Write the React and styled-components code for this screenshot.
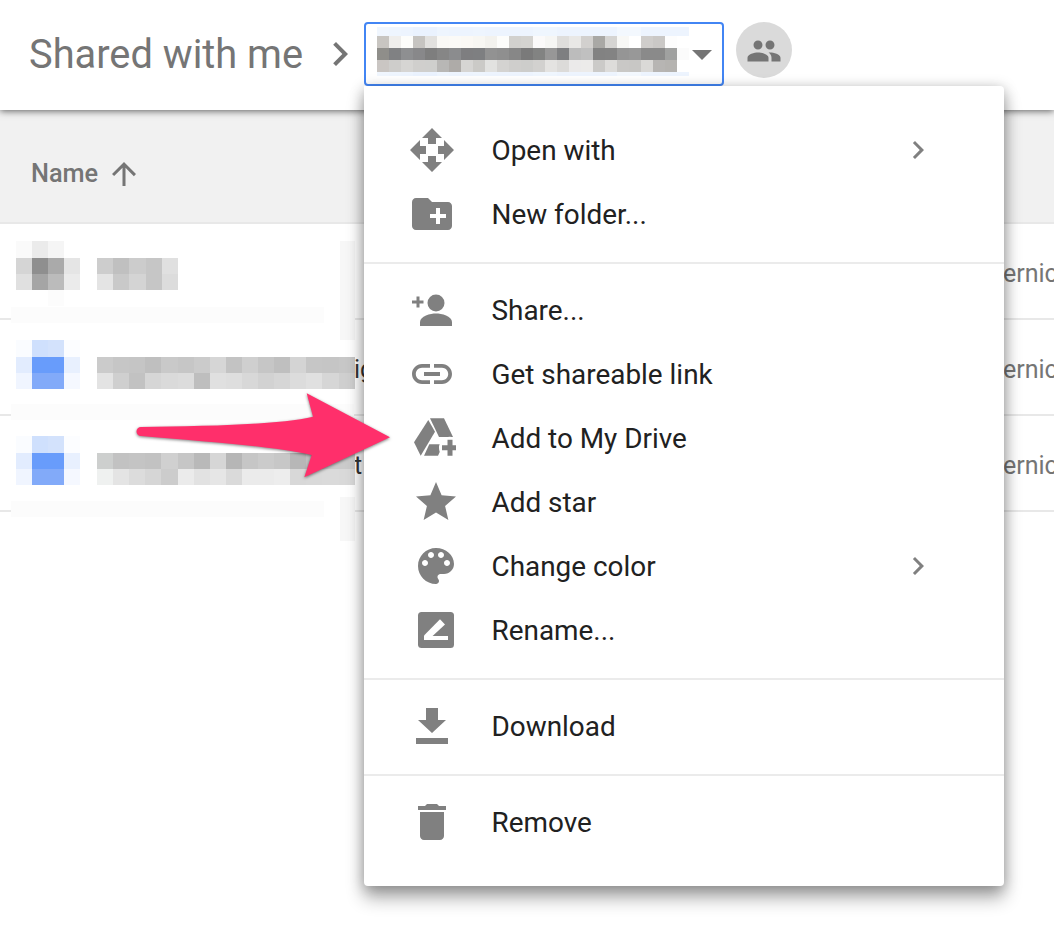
import React from "react";
import styled, { createGlobalStyle } from "styled-components";

const Global = createGlobalStyle`
  html, body { margin: 0; padding: 0; background: #fff; }
  body { font-family: Roboto, "Liberation Sans", sans-serif; }
`;

const Page = styled.div`
  position: relative;
  width: 1054px;
  height: 938px;
  overflow: hidden;
  background: #fff;
`;

const TopBar = styled.header`
  position: relative;
  z-index: 2;
  display: flex;
  align-items: flex-start;
  height: 110px;
  box-sizing: border-box;
  padding: 22px 0 0 29px;
  background: #fff;
  box-shadow: 0 1px 7px rgba(0, 0, 0, 0.62);
`;

const Title = styled.h1`
  flex: none;
  width: 273px;
  margin: 1px 0 0;
  font-size: 39.8px;
  font-weight: 400;
  line-height: 64px;
  color: #757575;
  white-space: nowrap;
`;

const Crumb = styled.svg`
  flex: none;
  width: 48px;
  height: 48px;
  margin: 8px 0 0 14px;
  fill: #757575;
`;

const Dropdown = styled.div`
  flex: none;
  display: flex;
  align-items: flex-start;
  width: 360px;
  height: 64px;
  box-sizing: border-box;
  padding: 3px 0 0 11px;
  border: 2px solid #4285f4;
  border-radius: 4px;
  background: #fff;
`;

const Caret = styled.svg`
  flex: none;
  width: 20px;
  height: 10px;
  margin: 23px 0 0 3px;
  fill: #757575;
`;

const Avatar = styled.div`
  flex: none;
  display: flex;
  align-items: center;
  justify-content: center;
  width: 56px;
  height: 56px;
  margin-left: 12px;
  border-radius: 50%;
  background: #dadada;
`;

const AvatarIcon = styled.svg`
  width: 36px;
  height: 36px;
  margin-top: 2px;
  fill: #757575;
`;

const HeaderRow = styled.div`
  display: flex;
  align-items: center;
  height: 114px;
  padding: 14px 0 0 31px;
  box-sizing: border-box;
  background: #f1f1f1;
  border-bottom: 2px solid #e8e8e8;
`;

const ColumnName = styled.span`
  font-size: 25.3px;
  font-weight: 500;
  color: #757575;
`;

const SortIcon = styled.svg`
  width: 36px;
  height: 36px;
  margin: 2px 0 0 8px;
  fill: #757575;
`;

const Row = styled.div`
  position: relative;
  display: grid;
  grid-template-columns: 354px 649px 1fr;
  align-items: center;
  height: 96px;
  box-sizing: border-box;
  border-bottom: 2px solid #e8e8e8;
  overflow: visible;
`;

const NameTail = styled.span`
  grid-column: 2;
  font-size: 25px;
  color: #333;
  margin-top: 4px;
`;

const Owner = styled.span`
  grid-column: 3;
  font-size: 25px;
  color: #757575;
  white-space: nowrap;
  margin-top: 4px;
`;

const Blur = styled.svg`
  position: absolute;
  left: 11px;
  top: ${(p) => p.$top}px;
  display: block;
`;

const Mosaic = styled.svg`
  flex: none;
  display: block;
  shape-rendering: crispEdges;
`;

const Menu = styled.nav`
  position: absolute;
  z-index: 3;
  left: 364px;
  top: 86px;
  width: 640px;
  box-sizing: border-box;
  padding: 32px 0;
  background: #fff;
  border-radius: 0 4px 4px 4px;
  box-shadow: 0 12px 18px rgba(0, 0, 0, 0.32), 0 2px 14px rgba(0, 0, 0, 0.25);
`;

const MenuItem = styled.div`
  display: flex;
  align-items: center;
  height: 64px;
  padding: 0 68px 0 44px;
`;

const ItemIcon = styled.svg`
  flex: none;
  width: 48px;
  height: 48px;
  margin-right: 36px;
  fill: #808080;
`;

const ItemLabel = styled.span`
  flex: 1;
  margin-left: -0.5px;
  font-size: 27.9px;
  color: #212121;
`;

const Submenu = styled.svg`
  flex: none;
  width: 36px;
  height: 36px;
  fill: #808080;
`;

const Divider = styled.hr`
  height: 2px;
  margin: 16px 0 14px;
  border: 0;
  background: #ebebeb;
`;

const Callout = styled.svg`
  position: absolute;
  z-index: 4;
  left: 130px;
  top: 385px;
  width: 270px;
  height: 100px;
  fill: #ff2f6b;
  filter: drop-shadow(0 1px 1.5px rgba(0, 0, 0, 0.5));
`;

const Cells = ({ x, y, w, h, colors }) =>
  colors.map((c, i) => <rect key={`${x}-${y}-${i}`} x={x + i * w} y={y} width={w} height={h} fill={c} shapeRendering="crispEdges" />);

const gray = (s) => s.split(" ").map((v) => `#${v}`);

const crumbTop = "f0f6fe eef5fe edf4fe eaf2fe eaf2fe eef5fe edf4fe edf4fe eef5fe edf4fe edf4fe edf4fe edf4fe eff6fe eff6fe edf4fe edf4fe edf4fe edf4fe edf4fe f3f8fe f3f8fe edf4fe edf4fe edf4fe edf4fe";
const crumbA = "c8c5c1 efeeec fdfdfb c6c4c1 e2e1df faf9f6 fbfaf7 fbf9f5 f8f7f3 f3f2ee fdfdfb d2d1ce d4d3d0 fbfafa f6f6f4 dfdedc e9e8e6 d2d0ce a9a8a5 d5d4d2 f8f8f6 ffffff cfcdcb cac8c6 fdfdfd ffffff";
const crumbB = "8f8e8a 808183 8e8f91 88888a 7e7e7e 868686 8b8c8e 7e7e80 7e7f81 929292 8f8f8f 878787 7a7a7a 828382 979797 7e7f81 bcbcbc c0c0c0 828282 838383 959595 989898 8a8a8a 8a8a8a a0a1a0 fbfbfb";
const crumbC = "cac6c3 cecdcb d6d5d3 d0cfcd cfcfcd b8b7b5 aeaba8 d6d5d3 cbcac7 e2e2e0 d4d3d1 cfcecc cdcdcb d2d1cf e4e3e1 dcdbd9 ebeaea ecebea cbcac8 dddcda c9c8c6 c8c7c5 dad9d7 b7b5b3 b5b3b0 ffffff";

const BlurBackdrop = ({ height }) => <rect x="0" y="0" width="343" height={height} fill="#fff" />;

const BlurOne = () => (
  <Blur $top={17} width="344" height="99" viewBox="0 0 344 99">
    <BlurBackdrop height={99} />
    <Cells x={5} y={0} w={16} h={17} colors={gray("fafafa ebebeb f5f5f5")} />
    <Cells x={5} y={17} w={16} h={16} colors={gray("d5d5d5 8f8f8f aaaaaa e5e5e5")} />
    <Cells x={5} y={33} w={16} h={16} colors={gray("e0e0e0 a5a5a5 bbbbbb ebebeb")} />
    <Cells x={37} y={49} w={16} h={16} colors={gray("fcfcfc")} />
    <Cells x={86} y={17} w={16.2} h={16} colors={gray("cdcdcd c0c0c0 cccccc c6c6c6 e0e0e0")} />
    <Cells x={86} y={33} w={16.2} h={16} colors={gray("e4e4e4 c9c9c9 d4d4d4 c6c6c6 dcdcdc")} />
    <rect x="0" y="66" width="313" height="16" fill="#fcfcfc" />
    <rect x="329" y="0" width="15" height="99" fill="#f7f7f7" />
  </Blur>
);

const BlurFile = ({ top, height, a, b, bandY, edge }) => (
  <Blur $top={top} width="344" height={height} viewBox={`0 0 344 ${height}`}>
    <BlurBackdrop height={height} />
    <Cells x={5} y={0} w={16} h={17} colors={gray("fafcff cfe0fd d3e2fc fcfdff")} />
    <Cells x={5} y={17} w={16} h={16} colors={gray("e2ecfe 689cfb 689cfb e8f0fe")} />
    <Cells x={5} y={33} w={16} h={16} colors={gray("f0f5ff 82aaf9 82aaf9 f5f8ff")} />
    <Cells x={86} y={17} w={16.1} h={16} colors={gray(a)} />
    <Cells x={86} y={33} w={16.1} h={16} colors={gray(b)} />
    <rect x="0" y={bandY} width={edge ? 313 : 343} height="16" fill="#fcfcfc" />
    {edge && <rect x="329" y={bandY - 4} width="15" height={height - bandY + 4} fill="#f7f7f7" />}
  </Blur>
);

const paths = {
  open: "M10 9h4V6h3l-5-5-5 5h3v3zm-1 1H6V7l-5 5 5 5v-3h3v-4zm14 2l-5-5v3h-3v4h3v3l5-5zm-9 3h-4v3H7l5 5 5-5h-3v-3z",
  folder: "M20 6h-8l-2-2H4c-1.11 0-1.99.89-1.99 2L2 18c0 1.11.89 2 2 2h16c1.11 0 2-.89 2-2V8c0-1.11-.89-2-2-2zm-1 8h-3v3h-2v-3h-3v-2h3V9h2v3h3v2z",
  link: "M3.9 12c0-1.71 1.39-3.1 3.1-3.1h4V7H7c-2.76 0-5 2.24-5 5s2.24 5 5 5h4v-1.9H7c-1.71 0-3.1-1.39-3.1-3.1zM8 13h8v-2H8v2zm9-6h-4v1.9h4c1.71 0 3.1 1.39 3.1 3.1s-1.39 3.1-3.1 3.1h-4V17h4c2.76 0 5-2.24 5-5s-2.24-5-5-5z",
  star: "M12 17.27L18.18 21l-1.64-7.03L22 9.24l-7.19-.61L12 2 9.19 8.63 2 9.24l5.46 4.73L5.82 21z",
  palette: "M12 3c-4.97 0-9 4.03-9 9s4.03 9 9 9c.83 0 1.5-.67 1.5-1.5 0-.39-.15-.74-.39-1.01-.23-.26-.38-.61-.38-.99 0-.83.67-1.5 1.5-1.5H16c2.76 0 5-2.24 5-5 0-4.42-4.03-8-9-8zm-5.5 9c-.83 0-1.5-.67-1.5-1.5S5.67 9 6.5 9 8 9.67 8 10.5 7.33 12 6.5 12zm3-4C8.67 8 8 7.33 8 6.5S8.67 5 9.5 5s1.5.67 1.5 1.5S10.33 8 9.5 8zm5 0c-.83 0-1.5-.67-1.5-1.5S13.67 5 14.5 5s1.5.67 1.5 1.5S15.33 8 14.5 8zm3 4c-.83 0-1.5-.67-1.5-1.5S16.67 9 17.5 9s1.5.67 1.5 1.5-.67 1.5-1.5 1.5z",
  trash: "M6 19c0 1.1.9 2 2 2h8c1.1 0 2-.9 2-2V7H6v12zM19 4h-3.5l-1-1h-5l-1 1H5v2h14V4z",
  chevron: "M10 6L8.59 7.41 13.17 12l-4.58 4.59L10 18l6-6z",
  people: "M16 11c1.66 0 2.99-1.34 2.99-3S17.66 5 16 5c-1.66 0-3 1.34-3 3s1.34 3 3 3zm-8 0c1.66 0 2.99-1.34 2.99-3S9.66 5 8 5C6.34 5 5 6.34 5 8s1.34 3 3 3zm0 2c-2.33 0-7 1.17-7 3.5V19h14v-2.5c0-2.33-4.67-3.5-7-3.5zm8 0c-.29 0-.62.02-.97.05 1.16.84 1.97 1.97 1.97 3.45V19h6v-2.5c0-2.33-4.67-3.5-7-3.5z",
  up: "M4 12l1.41 1.41L11 7.83V20h2V7.83l5.58 5.59L20 12l-8-8-8 8z",
};

const icons = {
  open: <ItemIcon viewBox="0 0 24 24"><path d={paths.open} /></ItemIcon>,
  folder: <ItemIcon viewBox="0 0 24 24"><path d={paths.folder} /></ItemIcon>,
  share: (
    <ItemIcon viewBox="0 0 48 48">
      <circle cx="28" cy="17" r="8.5" />
      <path d="M12 40v-4c0-6 10.500-8.500 16-8.500S44 30 44 36v4z" />
      <path d="M8.500 10.500h3v4h4v3h-4v4h-3v-4h-4.500v-3h4.500z" />
    </ItemIcon>
  ),
  link: <ItemIcon viewBox="0 0 24 24"><path d={paths.link} /></ItemIcon>,
  drive: (
    <ItemIcon viewBox="0 0 48 48">
      <path d="M22 4.300h14L45 23H31z" />
      <path d="M20.300 6 6 28.300l6.700 13.400L27 17.700z" />
      <path d="M21.300 30.300h14L30 41.700H16z" />
      <circle cx="42" cy="33.700" r="11" fill="#fff" />
      <path d="M39.500 25.700h5v5.500h5.500v5h-5.500v5.500h-5v-5.500H34v-5h5.500z" />
    </ItemIcon>
  ),
  star: <ItemIcon viewBox="-2 0 24 24"><path d={paths.star} /></ItemIcon>,
  palette: <ItemIcon viewBox="-2 0 24 24"><path d={paths.palette} /></ItemIcon>,
  rename: (
    <ItemIcon viewBox="-4 0 48 48">
      <rect x="6" y="6" width="36" height="36" rx="3.500" />
      <path d="M12 29.500 28 13.300l5 5.200L19.500 31 12 34z" fill="#fff" />
      <rect x="12" y="30" width="24" height="4" fill="#fff" />
    </ItemIcon>
  ),
  download: (
    <ItemIcon viewBox="0 0 48 48">
      <path d="M18 6h12v12h8L24 31 10 18h8z" />
      <rect x="8" y="36" width="32" height="6" />
    </ItemIcon>
  ),
  trash: <ItemIcon viewBox="0 0 24 24"><path d={paths.trash} /></ItemIcon>,
};

const groups = [
  [["open", "Open with", true], ["folder", "New folder..."]],
  [
    ["share", "Share..."],
    ["link", "Get shareable link"],
    ["drive", "Add to My Drive"],
    ["star", "Add star"],
    ["palette", "Change color", true],
    ["rename", "Rename..."],
  ],
  [["download", "Download"]],
  [["trash", "Remove"]],
];

export default function App() {
  return (
    <Page>
      <Global />
      <TopBar>
        <Title>Shared with me</Title>
        <Crumb viewBox="0 0 24 24"><path d={paths.chevron} /></Crumb>
        <Dropdown>
          <Mosaic width="312" height="49" viewBox="0 0 312 49">
            <Cells x={0} y={0} w={12} h={9} colors={gray(crumbTop)} />
            <Cells x={0} y={9} w={12} h={12} colors={gray(crumbA)} />
            <Cells x={0} y={21} w={12} h={12} colors={gray(crumbB)} />
            <Cells x={0} y={33} w={12} h={12} colors={gray(crumbC)} />
            <Cells x={0} y={45} w={12} h={4} colors={gray(crumbTop)} />
          </Mosaic>
          <Caret viewBox="0 0 20 10"><path d="M0 0h20L10 10z" /></Caret>
        </Dropdown>
        <Avatar>
          <AvatarIcon viewBox="0 0 24 24"><path d={paths.people} /></AvatarIcon>
        </Avatar>
      </TopBar>

      <HeaderRow>
        <ColumnName>Name</ColumnName>
        <SortIcon viewBox="0 0 24 24"><path d={paths.up} /></SortIcon>
      </HeaderRow>

      <Row>
        <Owner>ernic</Owner>
        <BlurOne />
      </Row>
      <Row>
        <NameTail>ig</NameTail>
        <Owner>ernic</Owner>
        <BlurFile
          top={20}
          height={96}
          a="cbcbcb c6c6c6 c5c5c5 bfbfbf c9c9c9 c6c6c6 cbcbcb d6d6d6 c3c3c3 cfcfcf c6c6c6 bfbfbf d4d4d4 c6c6c6 c5c5c5 c7c7c7"
          b="e3e3e3 cfcfcf c2c2c2 d6d6d6 dadada dcdcdc bebebe e0e0e0 dedede d8d8d8 d2d2d2 d6d6d6 dcdcdc e0e0e0 d6d6d6 cfcfcf"
          bandY={64}
        />
      </Row>
      <Row>
        <NameTail>t</NameTail>
        <Owner>ernic</Owner>
        <BlurFile
          top={20}
          height={105}
          a="cdcfce c2c2c2 c4c4c4 c2c2c2 d0d0d0 c6c6c6 b9b9b9 d6d6d6 b6b6b6 c6c6c6 cbcbcb c7c7c7 b7b7b7 c0c0c0 cbcbcb cbcbcb"
          b="eff1f0 e4e4e4 dcdcdc d6d6d6 cccccc ebebeb e2e2e2 e6e6e6 dadada ebebeb ebebeb ededed d8d8d8 d9d9d9 dadada d9d9d9"
          bandY={65}
          edge
        />
      </Row>

      <Menu>
        {groups.map((group, g) => (
          <React.Fragment key={g}>
            {g > 0 && <Divider />}
            {group.map(([icon, label, more]) => (
              <MenuItem key={label}>
                {icons[icon]}
                <ItemLabel>{label}</ItemLabel>
                {more && <Submenu viewBox="0 0 24 24"><path d={paths.chevron} /></Submenu>}
              </MenuItem>
            ))}
          </React.Fragment>
        ))}
      </Menu>

      <Callout viewBox="130 385 270 100">
        <path d="M141 427C200 426 280 425 313 416.700L306.700 393.300 390 437.300 304.300 477.300 311.700 455C280 447 200 441 141 436A4.500 4.500 0 0 1 141 427Z" />
      </Callout>
    </Page>
  );
}
